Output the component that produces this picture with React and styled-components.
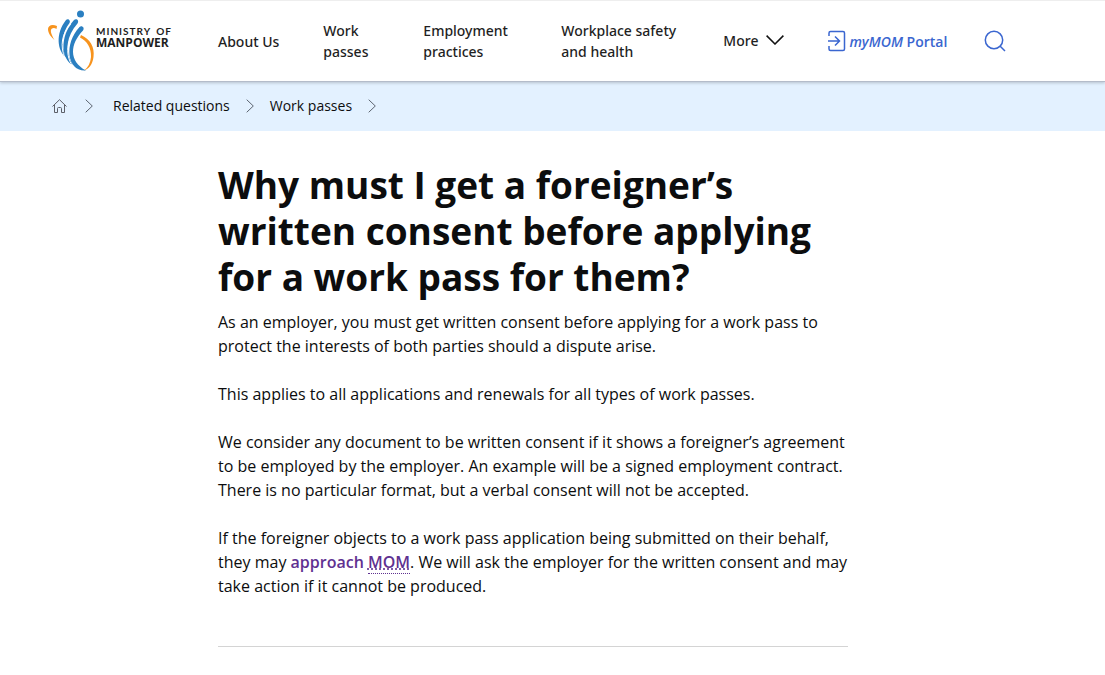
import React from "react";
import styled, { createGlobalStyle } from "styled-components";

const GlobalStyle = createGlobalStyle`
  *, *::before, *::after { box-sizing: border-box; }
  body {
    margin: 0;
    background: #fff;
    color: #0c0d0e;
    font-family: "Open Sans", "Noto Sans", sans-serif;
    font-size: 16px;
    line-height: 24px;
  }
`;

const Header = styled.header`
  position: relative;
  display: flex;
  align-items: center;
  height: 82px;
  padding-left: 48px;
  background: #fff;
  border-top: 1px solid #eee;
  border-bottom: 1px solid #b4bcca;
  box-shadow: 0 1px 3px rgba(0, 0, 0, 0.2);
`;

const Brand = styled.a`
  display: flex;
  align-items: center;
  flex: none;
  width: 170px;
  color: #1e1e1e;
  text-decoration: none;
`;

const BrandMark = styled.svg`
  flex: none;
  width: 48px;
  height: 62px;
`;

const BrandName = styled.span`
  display: flex;
  flex-direction: column;
  padding-bottom: 8px;
  font-weight: 700;
  white-space: nowrap;
`;

const BrandTop = styled.span`
  font-family: Lato, "Open Sans", sans-serif;
  font-size: 10px;
  line-height: 12px;
  letter-spacing: 1px;
  word-spacing: 2px;
`;

const BrandBottom = styled.span`
  font-size: 12px;
  line-height: 12px;
`;

const Nav = styled.nav`
  display: flex;
  align-items: center;
  gap: 44px;
`;

const NavLink = styled.a`
  width: ${(p) => p.$width || "auto"};
  color: #1f1f1f;
  font-family: "Noto Sans", "Open Sans", sans-serif;
  font-size: 14px;
  font-weight: 500;
  line-height: 21px;
  text-decoration: none;
`;

const MoreButton = styled.button`
  display: flex;
  align-items: center;
  gap: 8px;
  padding: 0 0 2px;
  border: 0;
  background: none;
  color: #1f1f1f;
  font: 500 14px/21px "Noto Sans", "Open Sans", sans-serif;
`;

const PortalLink = styled.a`
  display: flex;
  align-items: center;
  gap: 3px;
  color: #3a66d0;
  font-size: 14px;
  font-weight: 600;
  line-height: 21px;
  white-space: nowrap;
  text-decoration: none;
`;

const SearchButton = styled.button`
  display: flex;
  margin-left: -7px;
  padding: 0;
  border: 0;
  background: none;
  color: #3a66d0;
`;

const Breadcrumb = styled.nav`
  display: flex;
  align-items: center;
  height: 49px;
  padding: 0 0 2px 52px;
  background: #e3f1ff;
  font-size: 14px;
  line-height: 21px;
`;

const Crumb = styled.a`
  display: flex;
  color: #0c0d0e;
  text-decoration: none;
`;

const CrumbArrow = styled.svg`
  width: 8px;
  height: 14px;
  margin: 0 16px;
`;

const HomeArrow = styled(CrumbArrow)`
  margin: 0 20px 0 18px;
`;

const Main = styled.main`
  width: 57%;
  margin-left: 218px;
  padding-top: 31px;
`;

const Title = styled.h1`
  margin: 0 0 10px;
  font-size: 37px;
  font-weight: 700;
  line-height: 46px;
`;

const Paragraph = styled.p`
  margin: 0 0 24px;
`;

const ApproachLink = styled.a`
  color: #5f3191;
  font-weight: 600;
  text-decoration: none;
`;

const Abbr = styled.abbr`
  border-bottom: 1px dotted currentColor;
  text-decoration: underline dotted;
`;

const Divider = styled.hr`
  margin: 48px 0 0;
  border: 0;
  border-top: 1px solid #d4d4d4;
`;

function Logo() {
  return (
    <BrandMark viewBox="0 0 48 62" aria-hidden="true">
      <path d="M9 16C4 13.500 0 15.500 0 19C0 23 3 27 6.500 30C3.500 25 1.500 20 4 18.500C5.500 17.500 7 18 8.500 19Z" fill="#f7931d" />
      <path d="M33 25C42 29 47 37 45.500 47C44.500 54.500 41 59 36 60.500C40 57.500 42.500 53 43 47C43.500 38 39 31 32 27.500Z" fill="#f7931d" />
      <g fill="#2a7fc1">
        <path d="M18 10C20 8 23 10.500 21.500 13C14 23 12.500 35 18 47.500C9.500 41 7 24 18 10Z" />
        <path d="M26 10C28.500 8 31.500 10.500 29.500 13.500C18.500 26 16.500 40 24.500 55C13.500 49 11 27 26 10Z" />
        <path d="M31.500 17C34 15 37 18 35 20.500C22 34 20.500 51 38 60.500C19 62 15.500 34 31.500 17Z" />
        <circle cx="32.500" cy="4" r="3.500" />
      </g>
      <g fill="none" stroke="#fff" strokeWidth="1" strokeLinecap="round">
        <path d="M22.500 14.500C14 23 11.500 36 17 48" />
        <path d="M30.500 17C20 26 15.500 43 24.500 56" />
      </g>
    </BrandMark>
  );
}

const arrow = <path d="M.7.7 7.300 7 .7 13.300" fill="none" stroke="#5c6470" strokeWidth="1" />;

export default function App() {
  return (
    <>
      <GlobalStyle />
      <Header>
        <Brand href="#" aria-label="Ministry of Manpower">
          <Logo />
          <BrandName>
            <BrandTop>MINISTRY OF</BrandTop>
            <BrandBottom>MANPOWER</BrandBottom>
          </BrandName>
        </Brand>
        <Nav aria-label="Main">
          <NavLink href="#">About Us</NavLink>
          <NavLink href="#" $width="56px">Work passes</NavLink>
          <NavLink href="#" $width="94px">Employment practices</NavLink>
          <NavLink href="#" $width="118px">Workplace safety and health</NavLink>
          <MoreButton type="button">
            More
            <svg width="18" height="10" viewBox="0 0 18 10" fill="none" stroke="#111" strokeWidth="1.500" aria-hidden="true">
              <path d="M.6.6 9 9 17.400.6" />
            </svg>
          </MoreButton>
          <PortalLink href="#">
            <svg width="18" height="22" viewBox="0 0 18 22" fill="none" stroke="currentColor" strokeWidth="1.500" aria-hidden="true">
              <path d="M1 6V3Q1 1.500 2.500 1.500H15Q16.500 1.500 16.500 3V19Q16.500 20.500 15 20.500H2.500Q1 20.500 1 19V16M0 11H11M7 6.500 11.500 11 7 15.500" />
            </svg>
            <span><em>myMOM</em> Portal</span>
          </PortalLink>
          <SearchButton type="button" aria-label="Search">
            <svg width="22" height="22" viewBox="0 0 22 22" fill="none" stroke="currentColor" strokeWidth="1.500" aria-hidden="true">
              <circle cx="10" cy="10" r="8.700" />
              <path d="M16 16 21 21" />
            </svg>
          </SearchButton>
        </Nav>
      </Header>
      <Breadcrumb aria-label="Breadcrumb">
        <Crumb href="#" aria-label="Home">
          <svg width="15" height="14" viewBox="0 0 15 14" fill="none" stroke="#5c5f68" strokeWidth="1" aria-hidden="true">
            <path d="M.5 7.500 7.500.7 14.500 7.500M2.500 6V13.500H5.500V9.500Q5.500 8.500 6.500 8.500H8.500Q9.500 8.500 9.500 9.500V13.500H12.500V6" />
          </svg>
        </Crumb>
        <HomeArrow viewBox="0 0 8 14" aria-hidden="true">{arrow}</HomeArrow>
        <Crumb href="#">Related questions</Crumb>
        <CrumbArrow viewBox="0 0 8 14" aria-hidden="true">{arrow}</CrumbArrow>
        <Crumb href="#">Work passes</Crumb>
        <CrumbArrow viewBox="0 0 8 14" aria-hidden="true">{arrow}</CrumbArrow>
      </Breadcrumb>
      <Main>
        <Title>Why must I get a foreigner’s written consent before applying for a work pass for them?</Title>
        <Paragraph>
          As an employer, you must get written consent before applying for a work pass to protect
          the interests of both parties should a dispute arise.
        </Paragraph>
        <Paragraph>
          This applies to all applications and renewals for all types of work passes.
        </Paragraph>
        <Paragraph>
          We consider any document to be written consent if it shows a foreigner’s agreement to be
          employed by the employer. An example will be a signed employment contract. There is no
          particular format, but a verbal consent will not be accepted.
        </Paragraph>
        <Paragraph>
          If the foreigner objects to a work pass application being submitted on their behalf, they
          may <ApproachLink href="#">approach <Abbr title="Ministry of Manpower">MOM</Abbr></ApproachLink>.
          We will ask the employer for the written consent and may take action if it cannot be
          produced.
        </Paragraph>
        <Divider />
      </Main>
    </>
  );
}
